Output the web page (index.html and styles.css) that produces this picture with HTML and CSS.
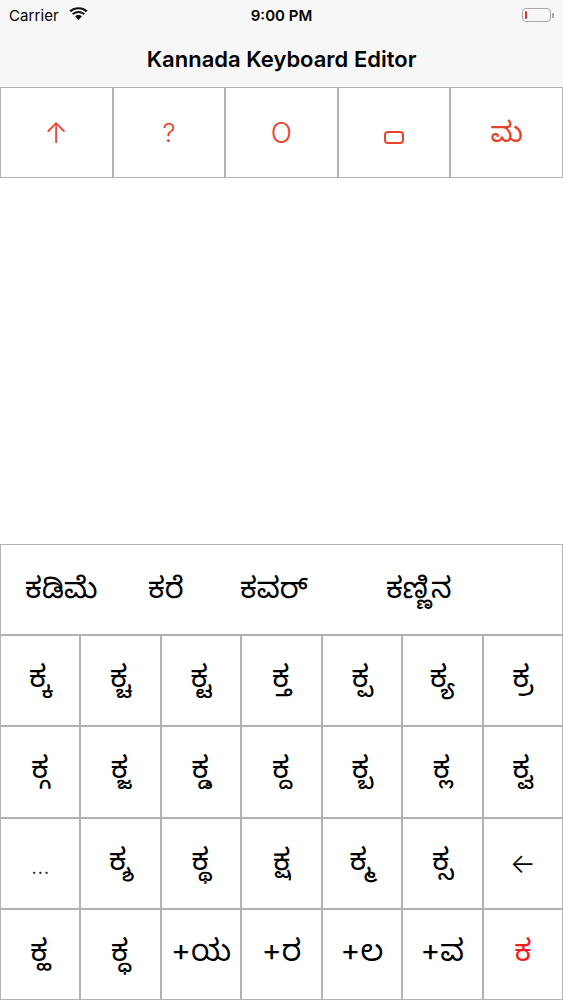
FILE: index.html
```html
<!DOCTYPE html>
<html lang="kn">
<head>
<meta charset="utf-8">
<title>Kannada Keyboard Editor</title>
<link rel="stylesheet" href="styles.css">
</head>
<body>
<div class="app">
  <header class="topbar">
    <div class="status">
      <div class="status-left">
        <span class="carrier">Carrier</span>
        <svg class="wifi" width="19" height="14" viewBox="0 0 19 14">
          <path d="M9.5 2.3c2.9 0 5.5 1.1 7.5 2.9l1.6-1.6C16.2 1.4 13 .2 9.5.2S2.8 1.4.4 3.6L2 5.2c2-1.8 4.6-2.9 7.5-2.9z" fill="#111"/>
          <path d="M9.5 6.1c1.9 0 3.6.7 4.9 1.9L16 6.4c-1.7-1.6-4-2.5-6.5-2.5S4.7 4.8 3 6.4L4.6 8c1.3-1.2 3-1.9 4.9-1.9z" fill="#111"/>
          <path d="M9.5 8.1c-1.3 0-2.4.5-3.3 1.3l3.3 3.6 3.3-3.6c-.9-.8-2-1.3-3.3-1.3z" fill="#111"/>
        </svg>
      </div>
      <div class="time">9:00 PM</div>
      <div class="status-right">
        <span class="battery"><span class="battery-level"></span></span><span class="battery-nub"></span>
      </div>
    </div>
    <div class="navbar"><h1 class="title">Kannada Keyboard Editor</h1></div>
  </header>

  <div class="tools">
    <button class="tool tool-arrow">↑</button>
    <button class="tool tool-q">?</button>
    <button class="tool tool-o">O</button>
    <button class="tool tool-rect" aria-label="ಂ"><span class="rect-glyph"></span></button>
    <button class="tool tool-kn">ಮ</button>
  </div>

  <main class="editor"></main>

  <section class="keyboard">
    <div class="suggestions">
      <span class="sugg s1">ಕಡಿಮೆ</span>
      <span class="sugg s2">ಕರೆ</span>
      <span class="sugg s3">ಕವರ್</span>
      <span class="sugg s4">ಕಣ್ಣಿನ</span>
    </div>
    <div class="keys">
      <button class="key">ಕ್ಕ</button>
      <button class="key">ಕ್ಚ</button>
      <button class="key">ಕ್ಟ</button>
      <button class="key">ಕ್ತ</button>
      <button class="key">ಕ್ಪ</button>
      <button class="key">ಕ್ಯ</button>
      <button class="key">ಕ್ರ</button>

      <button class="key">ಕ್ಗ</button>
      <button class="key">ಕ್ಜ</button>
      <button class="key">ಕ್ಡ</button>
      <button class="key">ಕ್ದ</button>
      <button class="key">ಕ್ಬ</button>
      <button class="key">ಕ್ಲ</button>
      <button class="key">ಕ್ವ</button>

      <button class="key key-small">…</button>
      <button class="key">ಕ್ಶ</button>
      <button class="key">ಕ್ಥ</button>
      <button class="key">ಕ್ಷ</button>
      <button class="key">ಕ್ಮ</button>
      <button class="key">ಕ್ಸ</button>
      <button class="key key-arrow">←</button>

      <button class="key">ಕ್ಹ</button>
      <button class="key">ಕ್ಧ</button>
      <button class="key">+ಯ</button>
      <button class="key">+ರ</button>
      <button class="key">+ಲ</button>
      <button class="key">+ವ</button>
      <button class="key key-red">ಕ</button>
    </div>
  </section>
</div>
</body>
</html>
```
FILE: styles.css
```css
* { box-sizing: border-box; }
html, body { margin: 0; padding: 0; }
body {
  width: 563px;
  height: 1000px;
  background: #ffffff;
  font-family: Inter, "Noto Sans", "Noto Sans Kannada", "Lohit Kannada", sans-serif;
  color: #000;
}
.app {
  display: flex;
  flex-direction: column;
  height: 1000px;
}
.topbar { background: #f7f7f7; }
.status {
  height: 30px;
  display: grid;
  grid-template-columns: 1fr auto 1fr;
  align-items: center;
  padding: 0 9px;
}
.status-left { display: flex; align-items: center; gap: 10px; }
.carrier { font-size: 15px; letter-spacing: 0.1px; }
.wifi { display: block; margin-top: -2px; }
.time { font-size: 15px; font-weight: 600; }
.status-right { display: flex; justify-content: flex-end; align-items: center; padding-right: 0; }
.battery {
  width: 29px;
  height: 14px;
  border: 1px solid #a8a8a8;
  border-radius: 4px;
  padding: 2px;
  display: flex;
}
.battery-level { width: 2px; background: #e0322a; border-radius: 1px; }
.battery-nub { width: 2px; height: 5px; background: #a8a8a8; border-radius: 0 1px 1px 0; margin-left: 1px; }
.navbar {
  height: 57px;
  display: flex;
  align-items: center;
  justify-content: center;
}
.title {
  margin: 0;
  font-size: 22px;
  font-weight: 600;
  letter-spacing: 0;
}

button {
  font-family: inherit;
  background: #fff;
  margin: 0;
  padding: 0;
  border: 1px solid #b2b2b2;
  color: #000;
  cursor: pointer;
}

.tools {
  display: grid;
  grid-template-columns: repeat(5, 1fr);
  height: 91px;
}
.tool {
  color: #e8412c;
  font-size: 26px;
  font-weight: 400;
  display: flex;
  align-items: center;
  justify-content: center;
}
.tool-arrow { font-size: 28px; font-weight: 300; }
.tool-q { font-size: 26px; font-weight: 300; }
.tool-o { font-size: 28px; font-weight: 300; }
.tool-kn { font-size: 28px; padding-top: 6px; }
.rect-glyph {
  display: block;
  width: 20px;
  height: 13px;
  border: 2px solid #e8412c;
  border-radius: 4px;
  margin-top: 10px;
}

.editor { flex: 1; }

.keyboard { height: 456px; display: flex; flex-direction: column; }
.suggestions {
  height: 91px;
  border: 1px solid #b2b2b2;
  display: flex;
  align-items: center;
  padding-left: 24px;
  padding-top: 4px;
  font-size: 29px;
}
.sugg { display: block; white-space: nowrap; }
.s1 { width: 123px; }
.s2 { width: 92px; }
.s3 { width: 146px; }

.keys {
  flex: 1;
  display: grid;
  grid-template-columns: repeat(7, 1fr);
  grid-template-rows: repeat(4, 1fr);
}
.key {
  font-size: 30px;
  display: flex;
  align-items: center;
  justify-content: center;
}
.key-small { font-size: 22px; font-weight: 300; padding-top: 6px; color: #222; }
.key-arrow { font-size: 27px; font-weight: 300; }
.key-red { color: #f01e1e; }
```
